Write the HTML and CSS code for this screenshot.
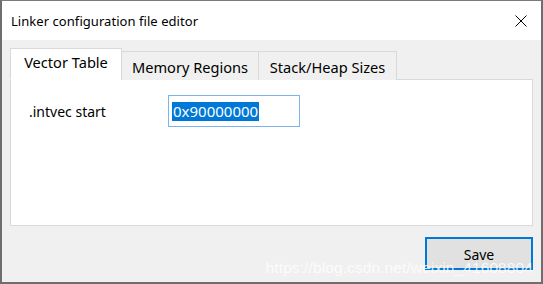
FILE: index.html
```html
<!DOCTYPE html>
<html>
<head>
<meta charset="utf-8">
<link rel="stylesheet" href="styles.css">
</head>
<body>
<div class="window">
  <div class="titlebar">
    <span class="title">Linker configuration file editor</span>
    <svg class="close" width="12" height="12" viewBox="0 0 12 12"><path d="M0.5 0.5 L11.5 11.5 M11.5 0.5 L0.5 11.5" stroke="#000" stroke-width="1" fill="none"/></svg>
  </div>
  <div class="body">
    <div class="tabs">
      <div class="tab active">Vector Table</div>
      <div class="tab">Memory Regions</div>
      <div class="tab">Stack/Heap Sizes</div>
    </div>
    <div class="panel">
      <div class="row">
        <span class="label">.intvec start</span>
        <div class="input"><span class="sel">0x90000000</span></div>
      </div>
    </div>
    <div class="actions">
      <button class="btn">Save</button>
    </div>
    <div class="watermark">https://blog.csdn.net/weixin_41608804</div>
  </div>
</div>
</body>
</html>
```
FILE: styles.css
```css
html, body {
  margin: 0;
  padding: 0;
  background: #ffffff;
}
body {
  font-family: "Noto Sans", "Open Sans", sans-serif;
  color: #000;
}
.window {
  width: 543px;
  height: 284px;
  box-sizing: border-box;
  border: 1px solid #7a7a7a;
  border-left: 2px solid #6e6e6e;
  border-right: 2px solid #6e6e6e;
  border-bottom: 2px solid #6e6e6e;
  display: flex;
  flex-direction: column;
  overflow: hidden;
}
.titlebar {
  height: 39px;
  background: #fff;
  display: flex;
  align-items: center;
  justify-content: space-between;
  padding: 0 14px 0 9px;
  flex: none;
}
.title {
  font-size: 13px;
  letter-spacing: 0.05px;
}
.close {
  display: block;
}
.body {
  flex: 1;
  background: #f0f0f0;
  padding: 9px 8px 0 8px;
  display: flex;
  flex-direction: column;
  position: relative;
}
.tabs {
  display: flex;
  align-items: flex-end;
  height: 31px;
  position: relative;
  z-index: 1;
  margin-bottom: -1px;
}
.tab {
  box-sizing: border-box;
  height: 29px;
  border: 1px solid #d9d9d9;
  border-bottom: none;
  background: #f0f0f0;
  font-size: 14.6px;
  display: flex;
  align-items: center;
  justify-content: center;
  margin-left: -1px;
}
.tab:nth-child(2) { width: 138px; padding-top: 1px; }
.tab:nth-child(3) { width: 139px; padding-top: 1px; }
.tab.active {
  height: 32px;
  width: 112px;
  background: #fff;
  margin-left: 0;
  margin-right: 0;
  padding-bottom: 5px;
  border-bottom: 1px solid #fff;
}
.panel {
  box-sizing: border-box;
  width: 523px;
  height: 147px;
  background: #fff;
  border: 1px solid #d9d9d9;
  padding: 15px 0 0 18px;
}
.row {
  display: flex;
  align-items: center;
}
.label {
  width: 139px;
  font-size: 14px;
}
.input {
  box-sizing: border-box;
  width: 132px;
  height: 32px;
  border: 1px solid #7ab4ea;
  background: #fff;
  display: flex;
  align-items: center;
  padding-left: 3px;
}
.sel {
  background: #0078d7;
  color: #fff;
  font-size: 15px;
  line-height: 19px;
  padding: 0 1px;
}
.actions {
  display: flex;
  justify-content: flex-end;
  padding-top: 11px;
  padding-right: 0;
}
.btn {
  box-sizing: border-box;
  width: 108px;
  height: 33px;
  background: #e1e1e1;
  border: 1px solid #0078d7;
  box-shadow: inset 0 0 0 1px #0078d7;
  font-family: "Noto Sans", "Open Sans", sans-serif;
  font-size: 14px;
  color: #000;
  padding: 0;
  padding-top: 2px;
}
.watermark {
  position: absolute;
  right: 8px;
  bottom: 5px;
  font-family: "Liberation Sans", Arial, sans-serif;
  font-size: 15.5px;
  color: rgba(255, 255, 255, 0.8);
  letter-spacing: 0.1px;
}
```
